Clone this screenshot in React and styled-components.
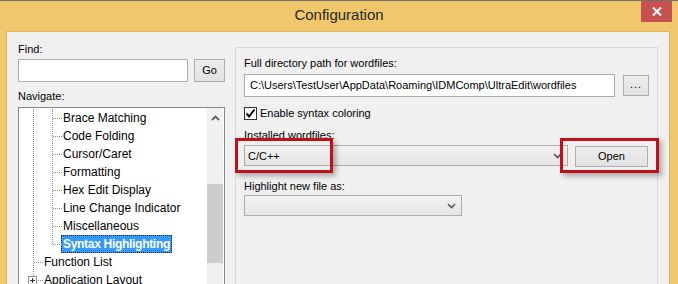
import React from "react";
import styled, { createGlobalStyle, css } from "styled-components";

const Global = createGlobalStyle`
  html, body { margin: 0; padding: 0; }
  body {
    width: 678px;
    height: 284px;
    overflow: hidden;
    background: #f0c86b;
    font-family: "Liberation Sans", Arial, sans-serif;
    font-size: 11px;
    color: #000;
  }
`;

const Window = styled.div`
  width: 678px;
  height: 284px;
  display: flex;
  flex-direction: column;
  border-top: 1px solid #6f6f6f;
  box-sizing: border-box;
  background: #f0c86b;
`;

const TitleBar = styled.div`
  height: 30px;
  display: grid;
  grid-template-columns: 1fr auto 1fr;
  align-items: start;
`;

const Title = styled.div`
  grid-column: 2;
  font-size: 15px;
  line-height: 30px;
  color: #262626;
  margin-top: -1px;
`;

const CloseButton = styled.div`
  grid-column: 3;
  justify-self: end;
  width: 31px;
  height: 21px;
  margin-right: 6px;
  background: #c75050;
  display: flex;
  align-items: center;
  justify-content: center;
`;

const Client = styled.div`
  flex: 1;
  margin: 0 8px 0 6px;
  border: 1px solid #d9b462;
  border-bottom: none;
  background: #f0f0f0;
  display: flex;
  padding: 0 11px;
  gap: 10px;
  overflow: hidden;
`;

const LeftPane = styled.div`
  width: 207px;
  padding-top: 10px;
  display: flex;
  flex-direction: column;
`;

const Label = styled.div`
  line-height: 14px;
  white-space: nowrap;
  margin-top: ${(p) => p.$mt || 0}px;
`;

const Row = styled.div`
  display: flex;
  align-items: ${(p) => p.$align || "center"};
  gap: ${(p) => p.$gap || 0}px;
  margin-top: ${(p) => p.$mt || 0}px;
`;

const TextBox = styled.div`
  box-sizing: border-box;
  width: ${(p) => p.$w}px;
  height: 23px;
  background: #fff;
  border: 1px solid #abadb3;
  padding-left: 5px;
  line-height: 21px;
  white-space: nowrap;
  overflow: hidden;
`;

const Button = styled.div`
  box-sizing: border-box;
  width: ${(p) => p.$w}px;
  height: ${(p) => p.$h || 21}px;
  margin-top: ${(p) => p.$mt || 0}px;
  border: 1px solid #adadad;
  background: linear-gradient(#ececec, #e2e2e2);
  display: flex;
  align-items: center;
  justify-content: center;
  line-height: 1;
  ${(p) =>
    p.$dots &&
    css`
      align-items: flex-end;
      padding-bottom: 5px;
      letter-spacing: 1px;
    `}
`;

const Tree = styled.div`
  box-sizing: border-box;
  margin-top: 4px;
  height: 200px;
  border: 1px solid #828790;
  background: #fff;
  display: flex;
`;

const TreeRows = styled.div`
  flex: 1;
  padding: 1px 0 0 5px;
  font-size: 12px;
`;

const TreeRow = styled.div`
  height: 18px;
  display: flex;
  align-items: stretch;
`;

const dotsV = "repeating-linear-gradient(to bottom, #8e8e8e 0 1px, transparent 1px 2px)";
const dotsH = "repeating-linear-gradient(to right, #8e8e8e 0 1px, transparent 1px 2px)";

const Cell = styled.span`
  position: relative;
  width: 19px;
  flex: none;
  &::before {
    content: "";
    position: absolute;
    left: 9px;
    top: 0;
    width: 1px;
    height: ${(p) => (p.$v === "full" ? "18px" : p.$v === "top" ? "9px" : "0")};
    background: ${dotsV};
  }
  &::after {
    content: "";
    position: absolute;
    left: 10px;
    top: 9px;
    height: 1px;
    width: ${(p) => (p.$h ? "9px" : "0")};
    background: ${dotsH};
  }
`;

const PlusBox = styled.span`
  position: absolute;
  left: 4px;
  top: 5px;
  width: 9px;
  height: 9px;
  box-sizing: border-box;
  border: 1px solid #919191;
  background: #fff;
  z-index: 1;
  &::before {
    content: "";
    position: absolute;
    left: 1px;
    top: 3px;
    width: 5px;
    height: 1px;
    background: #333;
  }
  &::after {
    content: "";
    position: absolute;
    left: 3px;
    top: 1px;
    width: 1px;
    height: 5px;
    background: #333;
  }
`;

const NodeLabel = styled.span`
  margin-left: -1px;
  padding: 0 2px;
  line-height: 18px;
  white-space: nowrap;
  box-sizing: border-box;
  ${(p) =>
    p.$selected &&
    css`
      background: #3399ff;
      color: #fff;
      font-weight: bold;
      letter-spacing: -0.3px;
      outline: 1px dotted #222;
      outline-offset: -1px;
    `}
`;

const ScrollBar = styled.div`
  width: 16px;
  background: #f0f0f0;
  margin-right: 1px;
  display: flex;
  flex-direction: column;
  align-items: stretch;
`;

const ScrollArrow = styled.div`
  height: 19px;
  display: flex;
  align-items: center;
  justify-content: center;
`;

const ScrollThumb = styled.div`
  height: 79px;
  margin-top: ${(p) => p.$offset}px;
  background: #cdcdcd;
`;

const RightPane = styled.div`
  flex: 1;
  padding-top: 15px;
`;

const GroupBox = styled.div`
  position: relative;
  box-sizing: border-box;
  height: 260px;
  border: 1px solid #d9d9d9;
  padding: 8px 8px 0 8px;
`;

const Check = styled.div`
  width: 13px;
  height: 13px;
  box-sizing: border-box;
  border: 1px solid #333;
  background: #fff;
  display: flex;
  align-items: center;
  justify-content: center;
`;

const Combo = styled.div`
  box-sizing: border-box;
  width: ${(p) => p.$w}px;
  height: 21px;
  border: 1px solid #acacac;
  background: linear-gradient(#f2f2f2, #e5e5e5);
  display: flex;
  align-items: center;
  justify-content: space-between;
  padding: 0 5px 0 3px;
`;

const Highlight = styled.div`
  position: absolute;
  top: 90px;
  left: ${(p) => p.$left}px;
  width: ${(p) => p.$w}px;
  height: 35px;
  box-sizing: border-box;
  border: 3px solid #c0101a;
  box-shadow: 3px 3px 5px rgba(0, 0, 0, 0.3);
`;

const Chevron = ({ color = "#555" }) => (
  <svg width="9" height="6" viewBox="0 0 9 6">
    <path d="M1 1 L4.5 4.5 L8 1" fill="none" stroke={color} strokeWidth="1.6" />
  </svg>
);

const nodes = [
  { label: "Brace Matching", cells: [{ v: "full" }, { v: "full", h: true }] },
  { label: "Code Folding", cells: [{ v: "full" }, { v: "full", h: true }] },
  { label: "Cursor/Caret", cells: [{ v: "full" }, { v: "full", h: true }] },
  { label: "Formatting", cells: [{ v: "full" }, { v: "full", h: true }] },
  { label: "Hex Edit Display", cells: [{ v: "full" }, { v: "full", h: true }] },
  { label: "Line Change Indicator", cells: [{ v: "full" }, { v: "full", h: true }] },
  { label: "Miscellaneous", cells: [{ v: "full" }, { v: "full", h: true }] },
  { label: "Syntax Highlighting", selected: true, cells: [{ v: "full" }, { v: "top", h: true }] },
  { label: "Function List", cells: [{ v: "full", h: true }] },
  { label: "Application Layout", cells: [{ v: "full", h: true, plus: true }] },
];

export default function App() {
  return (
    <>
      <Global />
      <Window>
        <TitleBar>
          <Title>Configuration</Title>
          <CloseButton>
            <svg width="10" height="9" viewBox="0 0 10 9">
              <path d="M1 0.5 L9 8.5 M9 0.5 L1 8.5" stroke="#fff" strokeWidth="2" />
            </svg>
          </CloseButton>
        </TitleBar>
        <Client>
          <LeftPane>
            <Label>Find:</Label>
            <Row $gap={6} $mt={3}>
              <TextBox $w={170} />
              <Button $w={31} $h={23}>Go</Button>
            </Row>
            <Label $mt={7}>Navigate:</Label>
            <Tree>
              <TreeRows>
                {nodes.map((n) => (
                  <TreeRow key={n.label}>
                    {n.cells.map((c, i) => (
                      <Cell key={i} $v={c.v} $h={c.h}>
                        {c.plus && <PlusBox />}
                      </Cell>
                    ))}
                    <NodeLabel $selected={n.selected}>{n.label}</NodeLabel>
                  </TreeRow>
                ))}
              </TreeRows>
              <ScrollBar>
                <ScrollArrow>
                  <svg width="9" height="6" viewBox="0 0 9 6">
                    <path d="M1 5 L4.5 1.5 L8 5" fill="none" stroke="#606060" strokeWidth="1.8" />
                  </svg>
                </ScrollArrow>
                <ScrollThumb $offset={57} />
              </ScrollBar>
            </Tree>
          </LeftPane>
          <RightPane>
            <GroupBox>
              <Label>Full directory path for wordfiles:</Label>
              <Row $gap={8} $mt={4}>
                <TextBox $w={371}>
                  C:\Users\TestUser\AppData\Roaming\IDMComp\UltraEdit\wordfiles
                </TextBox>
                <Button $w={26} $dots>...</Button>
              </Row>
              <Row $gap={3} $mt={9}>
                <Check>
                  <svg width="11" height="11" viewBox="0 0 11 11">
                    <path d="M1.5 5.5 L4 8.5 L9.5 1.5" fill="none" stroke="#000" strokeWidth="2" />
                  </svg>
                </Check>
                <Label>Enable syntax coloring</Label>
              </Row>
              <Label $mt={8}>Installed wordfiles:</Label>
              <Row $gap={7} $mt={3} $align="flex-start">
                <Combo $w={324}>
                  <span>C/C++</span>
                  <Chevron />
                </Combo>
                <Button $w={73} $mt={1}>Open</Button>
              </Row>
              <Label $mt={12}>Highlight new file as:</Label>
              <Row $mt={2}>
                <Combo $w={218}>
                  <span />
                  <Chevron />
                </Combo>
              </Row>
              <Highlight $left={-1} $w={98} />
              <Highlight $left={324} $w={99} />
            </GroupBox>
          </RightPane>
        </Client>
      </Window>
    </>
  );
}
